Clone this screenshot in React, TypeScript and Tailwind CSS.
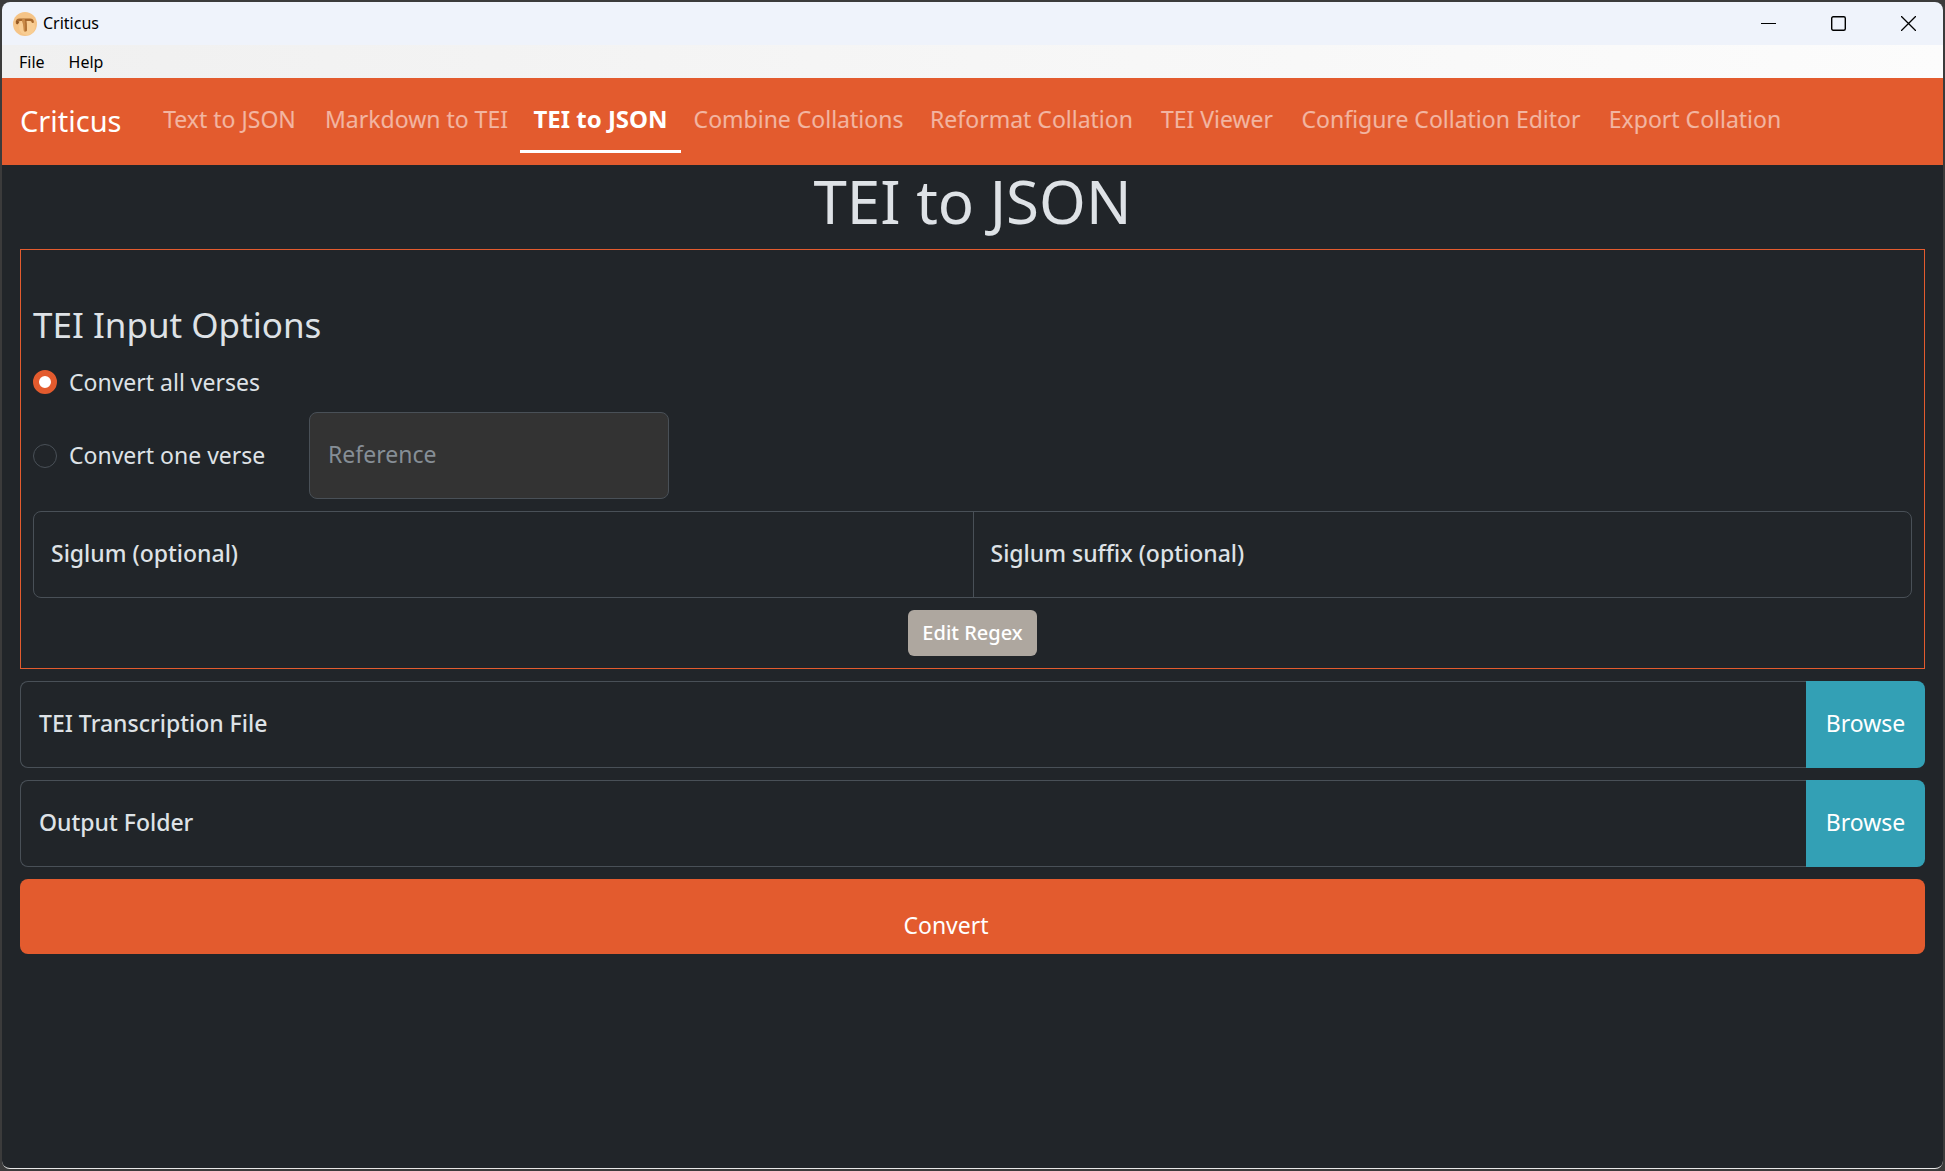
import React, { useState } from "react";

const links = [
  { label: "Text to JSON", width: "w-[167px]" },
  { label: "Markdown to TEI", width: "w-[207px]" },
  { label: "TEI to JSON", width: "w-[161px]" },
  { label: "Combine Collations", width: "w-[235px]" },
  { label: "Reformat Collation", width: "w-[231px]" },
  { label: "TEI Viewer", width: "w-[140px]" },
  { label: "Configure Collation Editor", width: "w-[308px]" },
  { label: "Export Collation", width: "w-[200px]" },
];

function AppIcon() {
  return (
    <svg width="24" height="24" viewBox="0 0 24 24" aria-hidden="true">
      <circle cx="12" cy="12" r="12" fill="#f5c487" />
      <circle cx="14" cy="15" r="8" fill="#fad39b" opacity="0.6" />
      <path
        d="M4 11C3.600 8.800 4.500 7.800 6.500 7.800H17c1.600 0 2.500.6 2.700 2"
        fill="none"
        stroke="#a8682c"
        strokeWidth="2.400"
        strokeLinecap="round"
      />
      <path d="M3 9l3.600.6-2 3z" fill="#8f5420" />
      <path d="M10.500 8.500c1.600 3 1.400 6 1.800 9.500" fill="none" stroke="#c98a47" strokeWidth="3.400" strokeLinecap="round" />
      <path d="M12.800 8.500c.6 4 .2 7 .2 10" fill="none" stroke="#a8682c" strokeWidth="1.400" strokeLinecap="round" />
    </svg>
  );
}

function TitleBar() {
  const control = "flex h-full w-[70px] items-center justify-center pb-[1px] hover:bg-black/5";
  return (
    <header className="flex h-[43px] items-center bg-[#eff3fb] pl-[11px] font-['Noto_Sans',sans-serif] text-base text-black">
      <AppIcon />
      <span className="ml-[6px] grow pb-[2px]">Criticus</span>
      <button type="button" aria-label="Minimize" className={control}>
        <svg width="15" height="15" viewBox="0 0 15 15" stroke="#000" aria-hidden="true">
          <path d="M0 7.500h15" />
        </svg>
      </button>
      <button type="button" aria-label="Maximize" className={control}>
        <svg width="15" height="15" viewBox="0 0 15 15" fill="none" stroke="#000" strokeWidth="1.400" aria-hidden="true">
          <rect x="0.700" y="0.700" width="13.600" height="13.600" rx="1.500" />
        </svg>
      </button>
      <button type="button" aria-label="Close" className={control}>
        <svg width="15" height="15" viewBox="0 0 15 15" stroke="#000" strokeWidth="1.300" aria-hidden="true">
          <path d="M0 0l15 15M15 0L0 15" />
        </svg>
      </button>
    </header>
  );
}

function FileRow({ label }: { label: string }) {
  return (
    <div className="mt-3 flex h-[87px]">
      <label className="flex min-w-0 grow items-center rounded-l-lg border border-r-0 border-[#495057] px-[18px] pb-[2px] font-medium">
        <span className="whitespace-nowrap">{label}</span>
        <input type="text" className="ml-4 min-w-0 grow bg-transparent outline-none" />
      </label>
      <button type="button" className="w-[119px] rounded-r-lg bg-[#33a0b5] pb-[2px] text-white">
        Browse
      </button>
    </div>
  );
}

const radio =
  "size-6 shrink-0 appearance-none rounded-full border border-[#495057] checked:border-[6px] checked:border-[#e35b2e] checked:bg-white";

export default function App() {
  const [mode, setMode] = useState("all");
  return (
    <div className="flex min-h-screen flex-col bg-[#3b3b3b] p-[2px]">
      <div className="flex grow flex-col overflow-hidden rounded-lg border-b border-[#e8e8e8] bg-[#212529] font-['Noto_Sans',sans-serif] text-[23px] text-[#dee2e6]">
        <TitleBar />
        <div className="flex h-[33px] items-center gap-6 bg-linear-to-r from-[#f0f0f0] to-[#fcfcfc] pl-[17px] text-base text-black">
          <button type="button">File</button>
          <button type="button">Help</button>
        </div>

        <nav className="flex h-[87px] items-center bg-[#e35b2e] pl-[18px]">
          <a href="#" className="w-[126px] pb-[2px] text-[29px] text-white">
            Criticus
          </a>
          {links.map(({ label, width }) => {
            const active = label === "TEI to JSON";
            return (
              <a
                key={label}
                href="#"
                aria-current={active ? "page" : undefined}
                className={`${width} flex h-[63px] items-center justify-center border-b-[3px] pb-[2px] whitespace-nowrap ${
                  active ? "border-white text-2xl font-bold text-white" : "border-transparent text-white/55"
                }`}
              >
                {label}
              </a>
            );
          })}
        </nav>

        <main className="px-[18px]">
          <h1 className="mb-3 text-center text-[60px] leading-[72px]">TEI to JSON</h1>

          <section className="border border-[#e35b2e] px-3 pt-[53px] pb-3">
            <h2 className="mb-[17px] text-[35px] leading-[44px]">TEI Input Options</h2>
            <label className="flex h-9 items-center gap-3">
              <input type="radio" name="mode" className={radio} checked={mode === "all"} onChange={() => setMode("all")} />
              Convert all verses
            </label>
            <div className="mt-3 flex h-[87px] items-center">
              <label className="flex w-[276px] items-center gap-3">
                <input type="radio" name="mode" className={radio} checked={mode === "one"} onChange={() => setMode("one")} />
                Convert one verse
              </label>
              <input
                type="text"
                aria-label="Reference"
                placeholder="Reference"
                className="h-full w-[360px] rounded-lg border border-[#495057] bg-[#333333] px-[18px] pb-[3px] outline-none placeholder:text-[#868e96]"
              />
            </div>
            <div className="mt-3 grid h-[87px] grid-cols-2 rounded-lg border border-[#495057] font-medium">
              <label className="flex min-w-0 items-center px-[17px] pb-[2px]">
                <span className="whitespace-nowrap">Siglum (optional)</span>
                <input type="text" className="ml-4 min-w-0 grow bg-transparent outline-none" />
              </label>
              <label className="flex min-w-0 items-center border-l border-[#495057] px-[17px] pb-[2px]">
                <span className="whitespace-nowrap">Siglum suffix (optional)</span>
                <input type="text" className="ml-4 min-w-0 grow bg-transparent outline-none" />
              </label>
            </div>
            <div className="mt-3 flex justify-center">
              <button type="button" className="h-[46px] w-[129px] rounded-md bg-[#aea79f] text-xl font-medium text-white">
                Edit Regex
              </button>
            </div>
          </section>

          <FileRow label="TEI Transcription File" />
          <FileRow label="Output Folder" />

          <button
            type="button"
            className="mt-3 flex h-[75px] w-full items-end justify-center rounded-lg bg-[#e35b2e] pb-3 text-white"
          >
            Convert
            <span className="ml-[5px] size-12" aria-hidden="true" />
          </button>
        </main>
      </div>
    </div>
  );
}
